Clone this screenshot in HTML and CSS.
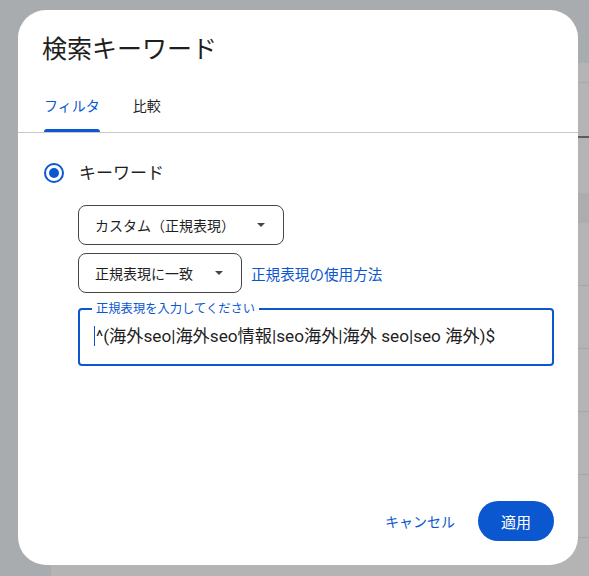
FILE: index.html
```html
<!DOCTYPE html>
<html lang="ja">
<head>
  <meta charset="UTF-8">
  <meta name="viewport" content="width=device-width, initial-scale=1.0">
  <title>検索キーワード</title>
  <link rel="stylesheet" href="styles.css">
</head>
<body>
  <!-- dimmed page behind the dialog -->
  <div class="page">
    <div class="page-head"></div>
    <div class="page-tabs"></div>
    <div class="table-head"></div>
    <div class="table-row"></div>
    <div class="table-row"></div>
    <div class="table-row"></div>
    <div class="table-row"></div>
    <div class="table-row"></div>
    <div class="table-row"></div>
  </div>

  <div class="dialog" role="dialog">
    <h1 class="dialog-title">検索キーワード</h1>

    <div class="tabs">
      <button class="tab active">フィルタ</button>
      <button class="tab">比較</button>
    </div>

    <div class="dialog-body">
      <label class="radio-row">
        <span class="radio"></span>
        キーワード
      </label>

      <div class="options">
        <div class="select">カスタム（正規表現）<span class="caret"></span></div>
        <div class="option-line">
          <div class="select">正規表現に一致<span class="caret"></span></div>
          <a class="help-link" href="#">正規表現の使用方法</a>
        </div>
        <fieldset class="field">
          <legend>正規表現を入力してください</legend>
          <div class="field-input"><span class="cursor"></span>^(海外seo|海外seo情報|seo海外|海外 seo|seo 海外)$</div>
        </fieldset>
      </div>
    </div>

    <div class="dialog-actions">
      <button class="btn-text">キャンセル</button>
      <button class="btn-filled">適用</button>
    </div>
  </div>
</body>
</html>
```

FILE: styles.css
```css
body {
  margin: 0;
  height: 576px;
  overflow: hidden;
  background-color: #a9acaf;
  font-family: Roboto, "Noto Sans CJK JP", sans-serif;
  color: #1f1f1f;
}
.page {
  margin: 63px 0 0 51px;
  background-color: #b4b4b4;
}
.page-head {
  height: 19px;
  border-bottom: 1px solid #a8a8a8;
}
.page-tabs {
  height: 53px;
  border-bottom: 2px solid #5c5c5c;
}
.table-head {
  height: 55px;
}
.table-head + .table-row {
  border-top: 30px solid #adadad;
}
.table-row {
  height: 62px;
  border-bottom: 1px solid #a6a6a6;
}
.dialog {
  position: absolute;
  left: 18px;
  top: 10px;
  width: 560px;
  height: 555px;
  box-sizing: border-box;
  display: flex;
  flex-direction: column;
  background-color: #fff;
  border-radius: 28px;
  padding: 24px 0;
}
.dialog-title {
  margin: 0 24px;
  font-size: 25px;
  font-weight: 400;
  line-height: 32px;
}
.tabs {
  display: flex;
  gap: 33px;
  margin-top: 18px;
  padding-left: 26px;
  border-bottom: 1px solid #c7c7c7;
}
.tab {
  display: flex;
  flex-direction: column;
  padding: 12px 0 0;
  border: none;
  background: none;
  font-family: inherit;
  font-size: 14px;
  line-height: 20px;
  color: #1f1f1f;
}
.tab::after {
  content: "";
  height: 3px;
  margin-top: 13px;
  border-radius: 3px 3px 0 0;
}
.tab.active {
  color: #0b57d0;
}
.tab.active::after {
  background-color: #0b57d0;
}
.dialog-body {
  flex: 1;
  padding: 28px 24px 0 26px;
}
.radio-row {
  display: flex;
  align-items: center;
  gap: 15px;
  font-size: 17px;
  line-height: 24px;
}
.radio {
  width: 20px;
  height: 20px;
  box-sizing: border-box;
  border: 2px solid #0b57d0;
  border-radius: 50%;
  display: flex;
  align-items: center;
  justify-content: center;
}
.radio::after {
  content: "";
  width: 10px;
  height: 10px;
  border-radius: 50%;
  background-color: #0b57d0;
}
.options {
  display: flex;
  flex-direction: column;
  align-items: flex-start;
  gap: 8px;
  margin: 20px 0 0 34px;
}
.option-line {
  display: flex;
  align-items: center;
  gap: 9px;
}
.select {
  display: flex;
  align-items: center;
  gap: 22px;
  height: 40px;
  box-sizing: border-box;
  padding: 0 18px 0 16px;
  border: 1px solid #444746;
  border-radius: 8px;
  font-size: 14px;
}
.caret {
  width: 0;
  height: 0;
  border-left: 4px solid transparent;
  border-right: 4px solid transparent;
  border-top: 4px solid #444746;
}
.help-link {
  color: #0b57d0;
  font-size: 14.6px;
  text-decoration: none;
}
.field {
  align-self: stretch;
  margin: 0;
  padding: 0 0 16px;
  border: 2px solid #0b57d0;
  border-radius: 4px;
}
.field legend {
  margin-left: 12px;
  padding: 0 4px;
  font-size: 12.3px;
  line-height: 16px;
  color: #0b57d0;
}
.field-input {
  padding: 7px 15px 0 14px;
  font-size: 17.2px;
  line-height: 24px;
  white-space: nowrap;
}
.cursor {
  display: inline-block;
  width: 1px;
  height: 20px;
  margin-right: 1px;
  vertical-align: -4px;
  background-color: #0b57d0;
}
.dialog-actions {
  display: flex;
  justify-content: flex-end;
  align-items: center;
  gap: 11px;
  padding-right: 24px;
}
.btn-text, .btn-filled {
  height: 40px;
  border: none;
  font-family: inherit;
  font-size: 14px;
  cursor: pointer;
}
.btn-text {
  padding: 0 12px;
  background: none;
  color: #0b57d0;
}
.btn-filled {
  padding: 0 23px;
  border-radius: 20px;
  background-color: #0b57d0;
  color: #fff;
  font-size: 15px;
}
```
